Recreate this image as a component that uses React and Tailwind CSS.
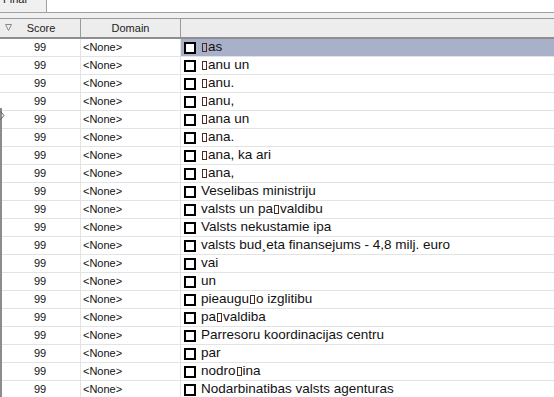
import React from "react";

const rows = [
  "□as",
  "□anu un",
  "□anu.",
  "□anu,",
  "□ana un",
  "□ana.",
  "□ana, ka ari",
  "□ana,",
  "Veselibas ministriju",
  "valsts un pa□valdibu",
  "Valsts nekustamie ipa",
  "valsts bud¸eta finansejums - 4,8 milj. euro",
  "vai",
  "un",
  "pieaugu□o izglitibu",
  "pa□valdiba",
  "Parresoru koordinacijas centru",
  "par",
  "nodro□ina",
  "Nodarbinatibas valsts agenturas",
];

// missing glyph box like the original rendering
const Tofu = () => (
  <span className="inline-block w-[5px] h-[9px] border border-[#4a2a22] mx-[1px] align-[-1px]" />
);

const Phrase = ({ text }) => {
  const parts = text.split("□");
  return (
    <span className="whitespace-pre">
      {parts.map((p, i) => (
        <React.Fragment key={i}>
          {i > 0 && <Tofu />}
          {p}
        </React.Fragment>
      ))}
    </span>
  );
};

const App = () => {
  return (
    <div
      className="relative w-[554px] h-[397px] overflow-hidden bg-white text-[#111]"
      style={{ fontFamily: '"Liberation Sans", Arial, sans-serif' }}
    >
      {/* tab strip */}
      <div className="flex h-[12px] bg-[#f0f0f0]">
        <div className="w-[46px] overflow-hidden relative">
          <span className="absolute left-[3px] top-[-9px] text-[11px] text-[#222]">Final</span>
        </div>
        <div className="flex-1 bg-white border-l border-[#a0a0a0]" />
      </div>
      <div className="h-[1px] bg-[#a0a0a0]" />
      <div className="h-[5px] bg-[#f0f0f0]" />

      {/* header */}
      <div className="flex h-[21px] bg-[#ededed] border-t border-[#9a9a9a] border-b-2 border-b-[#8f8f8f] text-[11px] text-[#222]">
        <div className="relative w-[81px] flex items-center justify-center border-r border-[#9a9a9a]">
          <svg className="absolute left-[5px] top-[5px]" width="7" height="7" viewBox="0 0 7 7">
            <path d="M0.5 0.5 H6.5 L3.5 6.5 Z" fill="none" stroke="#8a8a8a" strokeWidth="1" />
          </svg>
          <span className="pl-[2px]">Score</span>
        </div>
        <div className="w-[100px] flex items-center justify-center border-r border-[#9a9a9a]">
          Domain
        </div>
        <div className="flex-1" />
      </div>

      {/* rows */}
      <div className="flex flex-col">
        {rows.map((r, i) => (
          <div key={i} className="flex h-[18px] border-b border-[#e3e3e3]">
            <div className="w-[81px] flex items-center justify-center text-[11px] border-r border-[#e3e3e3]">
              99
            </div>
            <div className="w-[100px] flex items-center pl-[2px] text-[11px] border-r border-[#e3e3e3]">
              &lt;None&gt;
            </div>
            <div
              className={`flex-1 flex items-center pl-[3px] gap-[5px] text-[13.5px] ${
                i === 0 ? "bg-[#a9b1ca]" : ""
              }`}
            >
              <span className="w-[12px] h-[12px] border-2 border-black bg-white shrink-0" />
              <Phrase text={r} />
            </div>
          </div>
        ))}
      </div>

      {/* splitter edge with arrow */}
      <div className="absolute left-0 top-[108px] bottom-0 w-[2px] bg-[#8c8c8c]" />
      <svg className="absolute left-0 top-[111px]" width="5" height="9" viewBox="0 0 5 9">
        <path d="M0.5 0.5 L4 4.5 L0.5 8.5" fill="none" stroke="#555" strokeWidth="1" />
      </svg>
    </div>
  );
};

export default App;
